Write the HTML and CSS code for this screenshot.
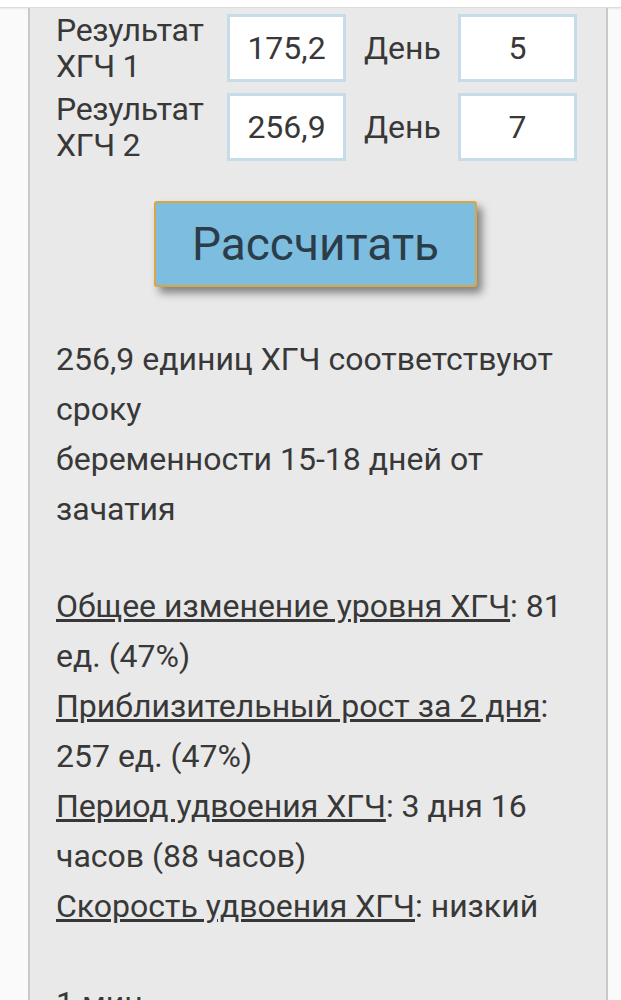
FILE: index.html
```html
<!DOCTYPE html>
<html lang="ru">
<head>
    <meta charset="utf-8">
    <title>Калькулятор ХГЧ</title>
    <link rel="stylesheet" href="styles.css">
</head>
<body>
    <div class="topbar"></div>
    <div class="panel">
        <div class="hcg-form">
            <label class="hcg-label">Результат ХГЧ 1</label>
            <input class="hcg-input" type="text" value="175,2">
            <span class="day-label">День</span>
            <input class="hcg-input" type="text" value="5">

            <label class="hcg-label">Результат ХГЧ 2</label>
            <input class="hcg-input" type="text" value="256,9">
            <span class="day-label">День</span>
            <input class="hcg-input" type="text" value="7">
        </div>

        <button class="calc-btn">Рассчитать</button>

        <div class="result">
            <p>256,9 единиц ХГЧ соответствуют сроку<br>беременности 15-18 дней от зачатия</p>
            <div class="stats">
                <div><a href="#">Общее изменение уровня ХГЧ</a>: 81 ед. (47%)</div>
                <div><a href="#">Приблизительный рост за 2 дня</a>: 257 ед. (47%)</div>
                <div><a href="#">Период удвоения ХГЧ</a>: 3 дня 16 часов (88 часов)</div>
                <div><a href="#">Скорость удвоения ХГЧ</a>: низкий</div>
            </div>
            <p class="time">1 мин</p>
        </div>
    </div>
</body>
</html>
```

FILE: styles.css
```css
body {
    margin: 0;
    background-color: #fafafa;
    font-family: Roboto, "Noto Sans", sans-serif;
    color: #383838;
}

.topbar {
    height: 7px;
    background-color: #ffffff;
    border-bottom: 1px solid #dcdcdc;
    box-shadow: 0 1px 2px rgb(0 0 0 / 8%);
}

.panel {
    margin: 0 13px 0 28px;
    background-color: #e9e9e9;
    border-left: 2px solid #c9c9c9;
    border-right: 2px solid #c9c9c9;
    padding: 4px 26px 0 26px;
    height: 1000px;
}

.hcg-form {
    display: grid;
    grid-template-columns: 171px 119px 112px 119px;
    row-gap: 7px;
    align-items: center;
}

.hcg-label {
    font-size: 32px;
    line-height: 36px;
    letter-spacing: -0.3px;
}

.day-label {
    font-size: 32px;
    padding-left: 18px;
}

.hcg-input {
    box-sizing: border-box;
    width: 119px;
    height: 68px;
    border: 3px solid #c6dde9;
    background-color: #ffffff;
    text-align: center;
    font-family: Roboto, sans-serif;
    font-size: 32px;
    color: #383838;
    padding: 0;
}

.calc-btn {
    display: block;
    margin: 38px 0 0 98px;
    width: 323px;
    height: 86px;
    background-color: #7dbde0;
    border: 2px solid #d7a645;
    border-radius: 3px;
    box-shadow: 5px 6px 8px rgb(0 0 0 / 45%);
    font-family: Roboto, sans-serif;
    font-size: 46px;
    color: #2c3d4a;
}

.result p,
.stats {
    margin: 0;
    font-size: 32px;
    line-height: 50px;
}

.result p:first-child {
    margin-top: 47px;
}

.stats {
    margin-top: 47px;
}

.stats a {
    color: #383838;
}

.result .time {
    margin-top: 47px;
}
```
